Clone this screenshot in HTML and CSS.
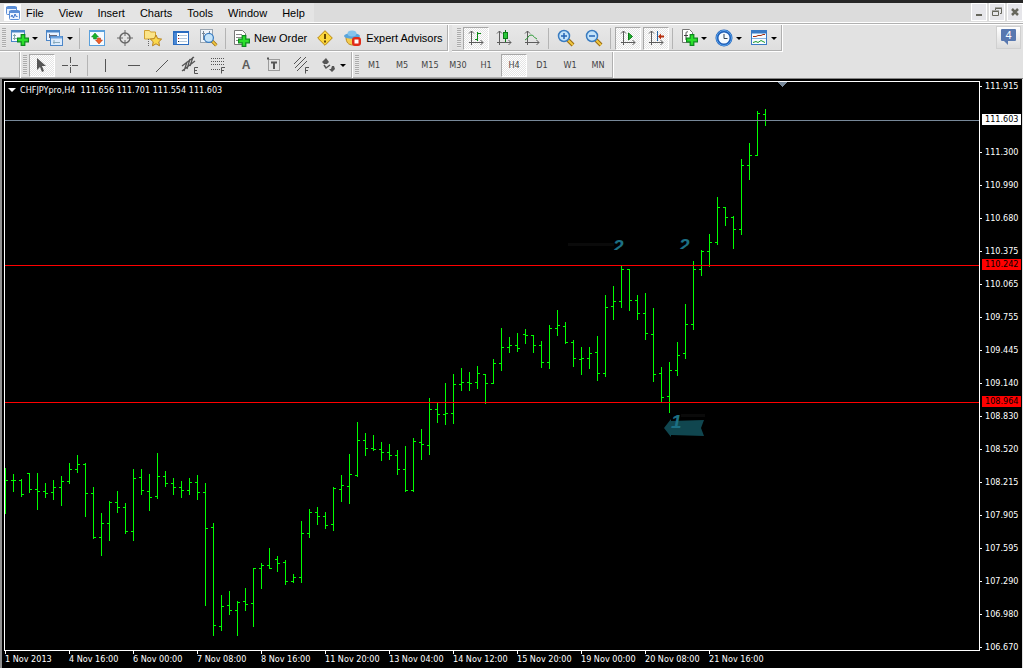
FILE: index.html
```html
<!DOCTYPE html>
<html lang="en">
<head>
<meta charset="utf-8">
<title>CHFJPYpro,H4</title>
<link rel="stylesheet" href="styles.css">
</head>
<body>
<svg class="defs" aria-hidden="true">
  <defs>
    <symbol id="plus" viewBox="0 0 10 10"><path d="M3.5.5h3v3h3v3h-3v3h-3v-3h-3v-3h3z" fill="#2be02b" stroke="#0a8a1c"/></symbol>
    <symbol id="axes" viewBox="0 0 16 16"><path d="M3.500 1v14M1 3.500l2.500-2.500L6 3.500M1 12.500h14M12.500 10l2.500 2.500-2.500 2.500" fill="none" stroke="#5c5c5c"/></symbol>
    <symbol id="lens" viewBox="0 0 18 18"><path d="M11 11l5 5" stroke="#9a6a10" stroke-width="4"/><path d="M11 11l5 5" stroke="#f0c840" stroke-width="2"/><circle cx="7" cy="7" r="5.500" fill="#c4e4fa" stroke="#3a7cc0" stroke-width="1.500"/></symbol>
  </defs>
</svg>
<div class="app">
  <header class="menubar">
    <nav class="menus">
      <svg class="appicon" viewBox="0 0 17 17"><rect width="17" height="17" fill="#fff"/><rect x="2.500" y="2.500" width="10" height="8" rx="1" fill="#eef5ff" stroke="#5b8ed6"/><path d="M2 4h11" stroke="#5b8ed6" stroke-width="2"/><rect x="5.500" y="6.500" width="10" height="9" rx="1" fill="#eef5ff" stroke="#5b8ed6"/><path d="M5 8h11" stroke="#5b8ed6" stroke-width="2"/><path d="M7 13l1-2 1.500 3 1.500-4 1.500 3 1-1" fill="none" stroke="#3a72c8"/></svg>
      <button class="menu">File</button><button class="menu">View</button><button class="menu">Insert</button><button class="menu">Charts</button><button class="menu">Tools</button><button class="menu">Window</button><button class="menu">Help</button>
    </nav>
    <div class="winbuttons">
      <button class="winbtn" aria-label="Minimize"><svg width="12" height="12"><path d="M3 9h6" stroke="#66665c" stroke-width="2"/></svg></button>
      <button class="winbtn" aria-label="Restore"><svg width="12" height="12" fill="none" stroke="#66665c"><path d="M4.500 4V2.500h6v5H9M4 2h7M1 5h7"/><path d="M1.500 5.500h6v4h-6z"/></svg></button>
      <button class="winbtn" aria-label="Close"><svg width="12" height="12"><path d="M3 3l6 6M9 3l-6 6" stroke="#66665c" stroke-width="2.500"/></svg></button>
    </div>
  </header>

  <div class="toolrow">
    <div class="toolbar">
      <i class="grip"></i>
      <button class="split" aria-label="New chart"><svg width="18" height="16"><rect x=".5" y=".5" width="13" height="11" fill="#f4f9ff" stroke="#4b86c8"/><path d="M1 1.500h13" stroke="#4b86c8" stroke-width="2"/><path d="M3.500 4v6M2 8.500h5M2 5.500h3" stroke="#8aa" /><use href="#plus" x="6" y="4" width="12" height="12"/></svg><i class="caret"></i></button>
      <button class="split" aria-label="Profiles"><svg width="18" height="16"><rect x=".5" y=".5" width="13" height="10" fill="#eaf3ff" stroke="#4b86c8"/><path d="M1 1.500h13" stroke="#4b86c8" stroke-width="2"/><path d="M3.500 4v4M3 5.500h8" stroke="#667"/><rect x="4.500" y="6.500" width="12" height="9" fill="#dcebfc" stroke="#4b86c8"/><path d="M5 7.500h11" stroke="#6fa4e0" stroke-width="2"/><path d="M7 12.500h7M8 10v4" stroke="#8ab"/></svg><i class="caret"></i></button>
      <i class="sep"></i>
      <button class="btn" aria-label="Market Watch"><svg width="16" height="16"><rect x=".5" y=".5" width="15" height="15" fill="#f6fbff" stroke="#5aa0dc"/><path d="M1 1h14" stroke="#5aa0dc" stroke-width="2"/><path d="M6 3l3.500 4H7.500v2h-3V7H2.500z" fill="#18b428" stroke="#0a7a18" stroke-width=".5"/><path d="M10 14l-3.500-4h2V8h3v2h2z" fill="#f06028" stroke="#b02808" stroke-width=".5"/></svg></button>
      <button class="btn" aria-label="Data Window"><svg width="16" height="16" fill="none" stroke="#666"><circle cx="8" cy="8" r="5" stroke-width="1.500"/><path d="M8 0v6M8 10v6M0 8h6M10 8h6"/></svg></button>
      <button class="btn" aria-label="Navigator"><svg width="18" height="17"><path d="M.5 2V.5h5l1 1.500h5v7H.5z" fill="#fbe488" stroke="#d0a030"/><path d="M4.500 9v7" stroke="#666" stroke-dasharray="1 1"/><path d="M12 5l1.700 3.600 3.900.5-2.800 2.700.7 4-3.500-2-3.500 2 .7-4-2.800-2.700 3.900-.5z" fill="#fbd84c" stroke="#b8821c"/></svg></button>
      <button class="btn" aria-label="Terminal"><svg width="16" height="14"><rect x=".5" y=".5" width="15" height="13" fill="#fff" stroke="#2a6cc0"/><path d="M1 1.500h14" stroke="#2a6cc0"/><rect x="1" y="2" width="3" height="11" fill="#4a88d4"/><path d="M6 4.500h8M6 7.500h8M6 10.500h8" stroke="#b4c8dc"/><path d="M5 4.500h1M5 10.500h1" stroke="#222"/><path d="M5 7.500h1" stroke="#d22"/></svg></button>
      <button class="btn" aria-label="Strategy Tester"><svg width="18" height="18"><rect x=".5" y=".5" width="12" height="13" fill="#eef4fa" stroke="#98a4b0"/><path d="M3.500 2v9M9.500 2v9M2 4.500h3" stroke="#789"/><use href="#lens" x="3" y="3" width="15" height="15"/></svg></button>
      <i class="sep"></i>
      <button class="wide"><svg width="16" height="17"><path d="M.5.5h8l3 3v11H.5z" fill="#fff" stroke="#777"/><path d="M2 4.500h6M2 7.500h7M2 10.500h5" stroke="#888"/><use href="#plus" x="4" y="5" width="12" height="12"/></svg>New Order</button>
      <button class="btn" aria-label="MetaEditor"><svg width="16" height="16"><path d="M8 .7L15.300 8 8 15.300.7 8z" fill="#fbd63c" stroke="#b8860c"/><path d="M8 4v5M8 10.500v2" stroke="#6a4a00" stroke-width="2"/></svg></button>
      <button class="wide"><svg width="18" height="17"><path d="M2 7c0 5 2 8 7 8s6-3 6-8z" fill="#f4cc50" stroke="#b88820"/><ellipse cx="8" cy="6" rx="8" ry="2.800" fill="#58a4dc"/><ellipse cx="8" cy="3.500" rx="4.500" ry="3" fill="#84c4ec"/><rect x="8" y="7" width="9" height="9" rx="3" fill="#e02c18"/><rect x="10.500" y="9.500" width="4" height="4" fill="#fff"/></svg>Expert Advisors</button>
    </div>
    <div class="toolbar charts">
      <i class="grip"></i>
      <button class="btn on" aria-label="Bar chart"><svg width="16" height="16"><use href="#axes"/><path d="M9.500 2v9M7 9.500h2M10 3.500h3" stroke="#0a8a14"/></svg></button>
      <button class="btn" aria-label="Candlesticks"><svg width="16" height="16"><use href="#axes"/><path d="M9.500 0v12" stroke="#0a7a14"/><rect x="7.500" y="2.500" width="4" height="6" fill="#28c838" stroke="#0a7a14"/></svg></button>
      <button class="btn" aria-label="Line chart"><svg width="16" height="16"><use href="#axes"/><path d="M1 10c3-1 3-5 6-5s3 3 6 4" fill="none" stroke="#2a9a34"/></svg></button>
      <i class="sep"></i>
      <button class="btn" aria-label="Zoom in"><svg width="18" height="18"><use href="#lens"/><path d="M4 7h6M7 4v6" stroke="#2464b4" stroke-width="1.500"/></svg></button>
      <button class="btn" aria-label="Zoom out"><svg width="18" height="18"><use href="#lens"/><path d="M4 7h6" stroke="#2464b4" stroke-width="1.500"/></svg></button>
      <i class="sep"></i>
      <button class="btn on" aria-label="Auto scroll"><svg width="16" height="16"><use href="#axes"/><path d="M8.500 3v7l4-3.500z" fill="#20b030" stroke="#0a7a14"/></svg></button>
      <button class="btn on" aria-label="Chart shift"><svg width="16" height="16"><use href="#axes"/><path d="M9.500 1v10" stroke="#2464a4"/><path d="M10 6.500l3-3v2h3v2h-3v2z" fill="#b83010"/></svg></button>
      <i class="sep"></i>
      <button class="split" aria-label="Indicators"><svg width="18" height="18"><path d="M2.500.5h7l3 3v10h-10z" fill="#fff" stroke="#777"/><path d="M8 3c-2-1-2 1-2 3v5M4 6.500h4" fill="none" stroke="#444"/><use href="#plus" x="6" y="5" width="12" height="12"/></svg><i class="caret"></i></button>
      <button class="split" aria-label="Periods"><svg width="18" height="18"><circle cx="9" cy="9" r="7" fill="#f4faff" stroke="#1f5fb8" stroke-width="3"/><circle cx="9" cy="9" r="7.500" fill="none" stroke="#5aa4ec"/><path d="M9 5v4.500h3.500" fill="none" stroke="#345"/></svg><i class="caret"></i></button>
      <button class="split" aria-label="Templates"><svg width="18" height="16"><rect x="1.500" y=".5" width="15" height="14" fill="#f8fcff" stroke="#3a7ac4"/><path d="M2 2h14" stroke="#3a7ac4" stroke-width="3"/><path d="M2 8.500h14" stroke="#8ab4e0"/><path d="M3 6.500h3l2-1h3l2-1h2" fill="none" stroke="#a83010"/><path d="M3 12.500l3-1 2 1 3-2 2 1 2 1" fill="none" stroke="#1a9a2a"/></svg><i class="caret"></i></button>
    </div>
    <button class="badge" aria-label="Messages"><svg width="18" height="17"><path d="M2 0h13q1 0 1 1v10q0 1-1 1H8v4l-4-4H2q-1 0-1-1V1q0-1 1-1z" fill="#5878b0"/></svg><span>4</span></button>
  </div>

  <div class="toolrow tools2">
    <div class="toolbar blank"></div>
    <div class="toolbar">
      <i class="grip"></i>
      <button class="btn on" aria-label="Cursor"><svg width="12" height="16"><path d="M1 1v12l3-3 2 5 2-1-2-5h4z" fill="#555"/></svg></button>
      <button class="btn" aria-label="Crosshair"><svg width="16" height="16"><path d="M8.500 0v6M8.500 10v6M0 8.500h6M10 8.500h6M8 8.500h1" stroke="#555"/></svg></button>
      <i class="sep"></i>
      <button class="btn" aria-label="Vertical line"><svg width="16" height="16"><path d="M7.500 2v13" stroke="#555"/></svg></button>
      <button class="btn" aria-label="Horizontal line"><svg width="16" height="16"><path d="M2 8.500h12" stroke="#555"/></svg></button>
      <button class="btn" aria-label="Trendline"><svg width="16" height="16"><path d="M2 15L14 3" stroke="#555"/></svg></button>
      <button class="btn" aria-label="Channel"><svg width="18" height="18" fill="none" stroke="#555"><path d="M1 10L13 1M1 15L14 5M3 15L6 6M6 13L9 3M9 10L12 1" stroke-width="1.300"/><path d="M17 11.500h-3.500v6H17M13 14.500h3"/></svg></button>
      <button class="btn" aria-label="Fibonacci"><svg width="16" height="18" fill="none" stroke="#555"><path d="M1 2.500h13M1 5.500h13M1 8.500h13M1 13.500h9" stroke-dasharray="1 1"/><path d="M15 11.500h-3.500v6M11 14.500h3"/></svg></button>
      <button class="btn letter">A</button>
      <button class="btn" aria-label="Text label"><svg width="16" height="16" fill="none" stroke="#555"><path d="M2.500 2.500h11v11h-11z" stroke-dasharray="1 1"/><path d="M5 5.500h6M8 5v7M1 1.500h2" stroke-width="2"/></svg></button>
      <button class="btn" aria-label="Fibonacci fan"><svg width="18" height="18" fill="none" stroke="#555"><path d="M1 8L8 1M2 12L13 1M4 15L14 5"/><path d="M16 11.500h-3.500v6M12 14.500h3"/></svg></button>
      <button class="split" aria-label="Arrows"><svg width="16" height="14"><path d="M1 4l4-4 3 4-2 2H3zM8 11h2l1-3h2l1 3-3 3z" fill="#555"/><path d="M3 7l2 3 4-3" fill="none" stroke="#555" stroke-width="1.500"/></svg><i class="caret"></i></button>
    </div>
    <div class="toolbar frames">
      <i class="grip"></i>
      <button class="btn">M1</button><button class="btn">M5</button><button class="btn">M15</button><button class="btn">M30</button><button class="btn">H1</button><button class="btn on">H4</button><button class="btn">D1</button><button class="btn">W1</button><button class="btn">MN</button>
    </div>
  </div>

  <main class="chart">
    <section class="plot">
      <svg class="canvas" shape-rendering="crispEdges">
        <path id="bars" fill="none" stroke="#00ff00"/>
        <line x1="0" y1="38.500" x2="100%" y2="38.500" stroke="#778899"/>
        <line x1="0" y1="183.500" x2="100%" y2="183.500" stroke="#f00"/>
        <line x1="0" y1="320.500" x2="100%" y2="320.500" stroke="#f00"/>
        <path d="M772 0h10l-5 5z" fill="#778899"/>
        <g shape-rendering="auto">
          <path d="M563 162.500h46M676 333.500h24" stroke="#0a0a0a" stroke-width="3"/>
          <path d="M659 346l7-9v2l33-1-3 8 3 8-33-1v2z" fill="#10464f"/>
          <text class="mark" x="608" y="171">2</text>
          <text class="mark" x="674" y="170">2</text>
          <path d="M606 168h16v5h-16zM672 167h16v5h-16z" fill="#000"/>
          <text class="mark" x="666" y="346">1</text>
        </g>
      </svg>
      <h1 class="title"><i class="down"></i>CHFJPYpro,H4&nbsp; 111.656 111.701 111.554 111.603</h1>
    </section>
    <div class="prices">
      <span>111.915</span><span></span><span>111.300</span><span>110.990</span><span>110.680</span><span>110.375</span><span>110.065</span><span>109.755</span><span>109.445</span><span>109.140</span><span>108.830</span><span>108.520</span><span>108.215</span><span>107.905</span><span>107.595</span><span>107.290</span><span>106.980</span><span>106.670</span>
      <b class="tag last">111.603</b><b class="tag upper">110.242</b><b class="tag lower">108.964</b>
    </div>
    <div class="times">
      <span>1 Nov 2013</span><span>4 Nov 16:00</span><span>6 Nov 00:00</span><span>7 Nov 08:00</span><span>8 Nov 16:00</span><span>11 Nov 20:00</span><span>13 Nov 04:00</span><span>14 Nov 12:00</span><span>15 Nov 20:00</span><span>19 Nov 00:00</span><span>20 Nov 08:00</span><span>21 Nov 16:00</span>
    </div>
  </main>
</div>
<script src="chart.js"></script>
</body>
</html>
```

FILE: styles.css
```css
* { box-sizing: border-box; }
body { margin: 0; background: #000; font: 11px/14px "Liberation Sans", Arial, sans-serif; color: #000; }
button { display: flex; align-items: center; justify-content: center; margin: 0; padding: 0; border: 0; background: none; font: inherit; color: inherit; }
svg { flex: none; display: block; }
.defs { position: absolute; width: 0; height: 0; }
.app { display: flex; flex-direction: column; min-height: 100vh; border-top: 3px solid #262626; background: #e2e2e2; }

.menubar { display: flex; justify-content: space-between; height: 22px; background: #dcdcdc; border-bottom: 1px solid #fff; box-shadow: inset 0 -1px #b0b0b0, inset 0 -2px #fff; padding-bottom: 2px; }
.menus { display: flex; align-items: center; gap: 1px; padding: 0 2px 0 4px; background: #e4e4e4; }
.appicon { width: 17px; height: 17px; margin-right: -3px; }
.menu { height: 19px; padding: 0 7px; }
.winbuttons { display: flex; gap: 2px; }
.winbtn { width: 16px; height: 18px; background: #e6e6ea; border: 1px solid #fff; }

.toolrow { display: flex; height: 27px; gap: 3px; }
.toolbar { display: flex; align-items: center; padding: 0 1px 0 2px; border-right: 1px solid #fff; border-bottom: 1px solid #fff; box-shadow: inset -1px -1px #b0b0b0; background: linear-gradient(#e8e8e8, #dedede); }
.charts { padding-left: 5px; }
.grip { width: 4px; height: 20px; margin-right: 1px; background: repeating-linear-gradient(#acacac 0 1px, #e8e8e8 1px 2px); }
.btn { width: 26px; height: 23px; margin: 0 1px; }
.split { width: 35px; height: 23px; gap: 3px; }
.wide { height: 23px; padding: 0 4px 0 5px; gap: 4px; }
.on { border: 1px solid #fff; border-top-color: #a8a8a8; border-left-color: #a8a8a8; background: repeating-conic-gradient(#fff 0 25%, #e4e4e4 0 50%) 0 0 / 2px 2px; }
.caret { border: 3px solid transparent; border-top-color: #000; border-bottom: 0; }
.sep { width: 1px; height: 21px; margin: 0 3px 0 2px; background: #b4b4b4; }
.badge { position: relative; width: 25px; height: 23px; margin: 1px 2px 0 auto; border: 1px solid #d0d0d0; background: linear-gradient(#fff, #dcdcdc); }
.badge span { position: absolute; top: 1px; left: 0; width: 100%; text-align: center; color: #fff; }

.tools2 { gap: 0; border-bottom: 1px solid #848484; }
.tools2 .toolbar { border-bottom: 0; background: #e2e2e2; }
.tools2 .sep { margin: 0 4px 0 3px; }
.blank { width: 21px; }
.letter { font-size: 12px; font-weight: bold; color: #5c5c5c; }
.frames { font: 9px/12px "DejaVu Sans Condensed", "DejaVu Sans", sans-serif; color: #444; }

.chart { flex: 1; display: grid; grid-template: minmax(569px, 1fr) 17px / minmax(0, 1fr) 42px; overflow: hidden; background: #000; color: #fff; border-left: 2px solid #909090; border-right: 1px solid #e2e2e2; font: 9px/14px "DejaVu Sans Condensed", "DejaVu Sans", sans-serif; }
.plot { position: relative; margin: 2px 0 0 2px; border: 1px solid #fff; }
.canvas { position: absolute; width: 100%; height: 100%; }
.mark { font: italic bold 19px "Liberation Sans", Arial, sans-serif; fill: #1c7084; }
.title { position: absolute; top: 1px; left: 3px; display: flex; align-items: center; gap: 4px; margin: 0; font: inherit; white-space: nowrap; }
.down { border: 4px solid transparent; border-top-color: #fff; border-bottom: 0; }
.prices { position: relative; grid-column: 2; grid-row: 1 / 3; height: 0; }
.prices span { display: flex; align-items: flex-start; height: 33px; gap: 3px; }
.prices span::before { content: ""; width: 2px; height: 1px; margin-top: 7px; background: #fff; }
.prices span:empty { visibility: hidden; }
.tag { position: absolute; left: 2px; width: 39px; height: 11px; padding-left: 3px; line-height: 11px; font-weight: normal; color: #000; background: #f00; }
.last { top: 35px; background: #fff; }
.upper { top: 180px; }
.lower { top: 317px; }
.times { grid-column: 1; display: flex; padding-left: 3px; white-space: nowrap; overflow: hidden; }
.times span { flex: none; width: 64px; line-height: 13px; text-indent: -1px; }
.times span::before { content: ""; display: block; width: 1px; height: 3px; margin-bottom: -1px; background: #fff; }
```

FILE: chart.js
```js
// One entry per H4 bar: high, low, open, close, as levels on the window's vertical scale.
const TOP = 82;
const STEP = 8;
const bars = [
  [468,514,480,480],[474,492,480,480],[479,497,480,494],[473,493,473,489],[473,510,489,491],[483,498,491,493],
  [480,500,492,487],[476,506,487,481],[463,484,481,469],[455,473,469,464],[463,517,464,493],[487,539,493,537],
  [513,556,537,523],[501,541,523,502],[491,513,502,507],[503,534,507,531],[469,541,531,478],[469,495,477,490],
  [474,511,491,497],[453,499,496,476],[471,487,476,483],[478,495,483,487],[481,498,487,490],[478,495,490,482],
  [475,500,482,492],[483,606,492,528],[523,636,527,625],[595,631,626,606],[591,615,605,610],[601,636,610,602],
  [588,611,601,604],[568,627,603,568],[563,589,568,565],[548,569,565,568],[556,572,559,563],[560,585,562,581],
  [574,583,581,577],[521,583,577,533],[509,538,533,512],[507,525,512,516],[512,529,516,525],[487,531,524,488],
  [475,502,489,485],[454,504,486,474],[422,477,475,440],[433,456,440,448],[435,451,448,449],[442,461,449,452],
  [444,460,452,455],[450,475,455,469],[446,492,469,490],[438,492,490,441],[429,460,442,444],[398,455,445,409],
  [403,423,409,414],[383,425,414,413],[374,424,413,384],[368,391,384,382],[372,391,382,383],[366,389,382,373],
  [374,404,374,383],[359,384,383,363],[328,371,363,347],[337,353,347,345],[333,352,345,348],[329,344,334,335],
  [335,353,335,345],[341,368,345,362],[325,369,362,328],[310,336,328,325],[322,344,326,342],[340,367,342,358],
  [347,375,359,358],[347,369,358,353],[336,381,352,373],[295,377,373,307],[286,320,306,301],[266,308,301,269],
  [269,311,269,300],[295,320,300,313],[293,340,313,333],[308,382,334,374],[367,402,373,397],[362,413,396,370],
  [342,376,370,355],[304,359,353,324],[261,330,324,269],[250,276,269,251],[234,267,251,242],[197,245,242,207],
  [207,226,207,217],[216,249,217,229],[159,235,229,165],[143,180,165,155],[111,156,155,113],[109,126,114,120]
];

const path = bars.map(([high, low, open, close], i) => {
  const x = i * STEP;
  return `M${x + 0.5} ${high - TOP}V${low - TOP}` +
    `M${x - 2} ${open - TOP + 0.5}h2M${x + 1} ${close - TOP + 0.5}h2`;
}).join("");

document.getElementById("bars").setAttribute("d", path);
```
